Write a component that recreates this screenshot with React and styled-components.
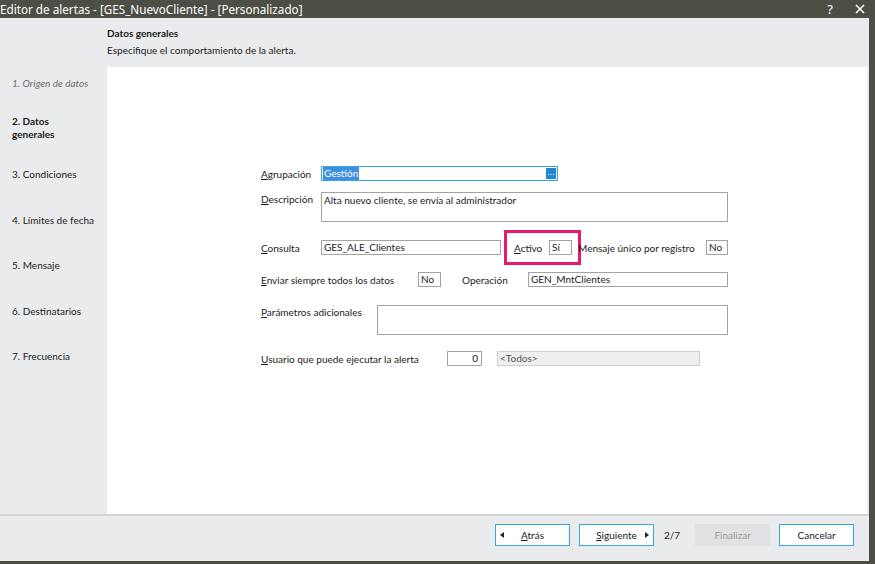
import React from "react";
import styled, { createGlobalStyle } from "styled-components";

const GlobalStyle = createGlobalStyle`
  html, body {
    margin: 0;
    padding: 0;
    background: #4d4e46;
  }
  body {
    font-family: "Lato", "Noto Sans", sans-serif;
    font-size: 10px;
    color: #1b1b1b;
  }
`;

const steps = [
  { label: "1. Origen de datos", state: "done" },
  { label: "2. Datos generales", state: "active" },
  { label: "3. Condiciones" },
  { label: "4. Límites de fecha" },
  { label: "5. Mensaje" },
  { label: "6. Destinatarios" },
  { label: "7. Frecuencia" },
];

function U({ children }) {
  return <Under>{children}</Under>;
}

export default function App() {
  return (
    <>
      <GlobalStyle />
      <Frame>
        <TitleBar>
          <Title>Editor de alertas - [GES_NuevoCliente] - [Personalizado]</Title>
          <TitleButtons>
            <span>?</span>
            <CloseIcon viewBox="0 0 10 10">
              <path d="M1 1 L9 9 M9 1 L1 9" stroke="#fff" strokeWidth="1.6" />
            </CloseIcon>
          </TitleButtons>
        </TitleBar>

        <Body>
          <Header>
            <HeaderTitle>Datos generales</HeaderTitle>
            <HeaderText>Especifique el comportamiento de la alerta.</HeaderText>
          </Header>

          <Main>
            <Sidebar>
              {steps.map((s) => (
                <Step key={s.label} state={s.state}>
                  {s.label}
                </Step>
              ))}
            </Sidebar>

            <Content>
              <Form>
                <Row $top={0}>
                  <Label $w={60}>
                    <U>A</U>grupación
                  </Label>
                  <SelectedInput>
                    <Highlight>Gestión</Highlight>
                    <DotsButton>
                      <svg width="6" height="2" viewBox="0 0 6 2">
                        <rect x="0" y="0" width="1" height="1" fill="#fff" />
                        <rect x="2.5" y="0" width="1" height="1" fill="#fff" />
                        <rect x="5" y="0" width="1" height="1" fill="#fff" />
                      </svg>
                    </DotsButton>
                  </SelectedInput>
                </Row>

                <Row $top={11} $start>
                  <Label $w={60}>
                    <U>D</U>escripción
                  </Label>
                  <Field $w={407} $h={30} $multi>
                    Alta nuevo cliente, se envía al administrador
                  </Field>
                </Row>

                <Row $top={18}>
                  <Label $w={60}>
                    <U>C</U>onsulta
                  </Label>
                  <Field $w={180}>GES_ALE_Clientes</Field>
                  <Highlighted>
                    <Label $w={35}>
                      <U>A</U>ctivo
                    </Label>
                    <Field $w={23}>Sí</Field>
                  </Highlighted>
                  <Label $w={128}>Mensaje único por registro</Label>
                  <Field $w={22}>No</Field>
                </Row>

                <Row $top={17}>
                  <Label $w={157}>
                    <U>E</U>nviar siempre todos los datos
                  </Label>
                  <Field $w={23}>No</Field>
                  <Label $w={87} $pl={21}>
                    Operación
                  </Label>
                  <Field $w={200}>GEN_MntClientes</Field>
                </Row>

                <Row $top={18} $start>
                  <Label $w={116}>
                    <U>P</U>arámetros adicionales
                  </Label>
                  <Field $w={351} $h={30} $multi />
                </Row>

                <Row $top={16}>
                  <Label $w={186}>
                    <U>U</U>suario que puede ejecutar la alerta
                  </Label>
                  <Field $w={35} $right>
                    0
                  </Field>
                  <Field $w={203} $disabled $ml={15}>
                    &lt;Todos&gt;
                  </Field>
                </Row>
              </Form>
            </Content>
          </Main>

          <Footer>
            <Button>
              <Arrow viewBox="0 0 4 6" $left>
                <path d="M4 0 L0 3 L4 6 Z" fill="#222" />
              </Arrow>
              <span>
                <U>A</U>trás
              </span>
            </Button>
            <Button>
              <span>
                <U>S</U>iguiente
              </span>
              <Arrow viewBox="0 0 4 6">
                <path d="M0 0 L4 3 L0 6 Z" fill="#222" />
              </Arrow>
            </Button>
            <PageCount>2/7</PageCount>
            <Button disabled>Finalizar</Button>
            <Button>Cancelar</Button>
          </Footer>
        </Body>
      </Frame>
    </>
  );
}

const Frame = styled.div`
  width: 875px;
  height: 564px;
  display: flex;
  flex-direction: column;
  box-sizing: border-box;
  padding: 0 6px 3px 0;
  background: #4d4e46;
`;

const TitleBar = styled.div`
  height: 18px;
  flex-shrink: 0;
  display: flex;
  align-items: center;
  justify-content: space-between;
  color: #fff;
  margin-right: -6px;
  padding-right: 10px;
`;

const Title = styled.div`
  font-family: "Noto Sans", "Open Sans", sans-serif;
  font-size: 11.7px;
  white-space: nowrap;
`;

const TitleButtons = styled.div`
  display: flex;
  align-items: center;
  gap: 22px;
  font-family: "Noto Sans", sans-serif;
  font-size: 13px;
`;

const CloseIcon = styled.svg`
  width: 10px;
  height: 10px;
`;

const Body = styled.div`
  flex: 1;
  display: flex;
  flex-direction: column;
  background: #eaebed;
  min-height: 0;
`;

const Header = styled.div`
  height: 49px;
  flex-shrink: 0;
  box-sizing: border-box;
  padding: 8px 0 0 107px;
`;

const HeaderTitle = styled.div`
  font-weight: bold;
  font-size: 10px;
  line-height: 14px;
`;

const HeaderText = styled.div`
  margin-top: 3px;
  font-size: 10px;
  line-height: 14px;
`;

const Main = styled.div`
  height: 447px;
  flex-shrink: 0;
  display: flex;
`;

const Sidebar = styled.div`
  width: 107px;
  flex-shrink: 0;
  box-sizing: border-box;
  padding: 10px 0 0 12px;
  display: flex;
  flex-direction: column;
`;

const Step = styled.div`
  font-size: 10px;
  line-height: 13px;
  width: ${(p) => (p.state === "active" ? "60px" : "94px")};
  white-space: ${(p) => (p.state === "active" ? "normal" : "nowrap")};
  margin-bottom: ${(p) =>
    p.state === "active" ? "27px" : p.state === "done" ? "25px" : "32.5px"};
  color: ${(p) => (p.state === "done" ? "#707070" : "#1b1b1b")};
  font-style: ${(p) => (p.state === "done" ? "italic" : "normal")};
  font-weight: ${(p) => (p.state === "active" ? "bold" : "normal")};
`;

const Content = styled.div`
  flex: 1;
  background: #fff;
  margin-right: 2px;
  box-sizing: border-box;
  padding: 99px 0 0 154px;
`;

const Form = styled.div`
  display: flex;
  flex-direction: column;
`;

const Row = styled.div`
  display: flex;
  align-items: ${(p) => (p.$start ? "flex-start" : "center")};
  margin-top: ${(p) => p.$top}px;
`;

const Label = styled.div`
  width: ${(p) => p.$w}px;
  padding-left: ${(p) => p.$pl || 0}px;
  flex-shrink: 0;
  box-sizing: border-box;
  font-size: 10px;
  line-height: 14px;
  white-space: nowrap;
`;

const Under = styled.span`
  text-decoration: underline;
  text-underline-offset: 1px;
`;

const Field = styled.div`
  width: ${(p) => p.$w}px;
  height: ${(p) => p.$h || 15}px;
  margin-left: ${(p) => p.$ml || 0}px;
  flex-shrink: 0;
  box-sizing: border-box;
  border: 1px solid ${(p) => (p.$disabled ? "#cfcfcf" : "#a3a3a3")};
  background: ${(p) => (p.$disabled ? "#efefef" : "#fff")};
  color: ${(p) => (p.$disabled ? "#555" : "#1b1b1b")};
  font-size: 10px;
  line-height: 13px;
  padding: 0 3px 0 2px;
  text-align: ${(p) => (p.$right ? "right" : "left")};
  white-space: nowrap;
  overflow: hidden;
  ${(p) => p.$multi && "padding-top: 1px;"}
`;

const SelectedInput = styled.div`
  width: 237px;
  height: 15px;
  box-sizing: border-box;
  border: 1px solid #3aa6e0;
  background: #fff;
  display: flex;
  align-items: center;
  justify-content: space-between;
  padding: 0 1px;
`;

const Highlight = styled.span`
  background: #3d8fe0;
  color: #fff;
  font-size: 10px;
  line-height: 13px;
  padding: 0 1px;
`;

const DotsButton = styled.div`
  width: 10px;
  height: 11px;
  background: #1f86d0;
  display: flex;
  align-items: center;
  justify-content: center;
  padding-top: 3px;
  box-sizing: border-box;
`;

const Highlighted = styled.div`
  display: flex;
  align-items: center;
  flex-shrink: 0;
  margin: -10px -3px -10px 3px;
  border: 3px solid #e8196a;
  height: 35px;
  box-sizing: border-box;
  padding: 0 6px 0 7px;
`;

const Footer = styled.div`
  flex: 1;
  border-top: 2px solid #d3d4d6;
  display: flex;
  align-items: center;
  padding: 0 0 7px 495px;
  box-sizing: border-box;
  gap: 9px;
`;

const Button = styled.button`
  width: 75px;
  height: 22px;
  box-sizing: border-box;
  border: 1px solid ${(p) => (p.disabled ? "#e1e2e4" : "#38a8dc")};
  background: ${(p) => (p.disabled ? "#e1e2e4" : "#fff")};
  color: ${(p) => (p.disabled ? "#9b9b9b" : "#1b1b1b")};
  font-family: "Lato", "Noto Sans", sans-serif;
  font-size: 10px;
  display: flex;
  align-items: center;
  justify-content: center;
  padding: 0 4px;
  position: relative;
`;

const Arrow = styled.svg`
  width: 4px;
  height: 6px;
  position: absolute;
  top: 7px;
  ${(p) => (p.$left ? "left: 4px;" : "right: 4px;")}
`;

const PageCount = styled.div`
  font-size: 10px;
  margin: 0 6px 0 1px;
`;
